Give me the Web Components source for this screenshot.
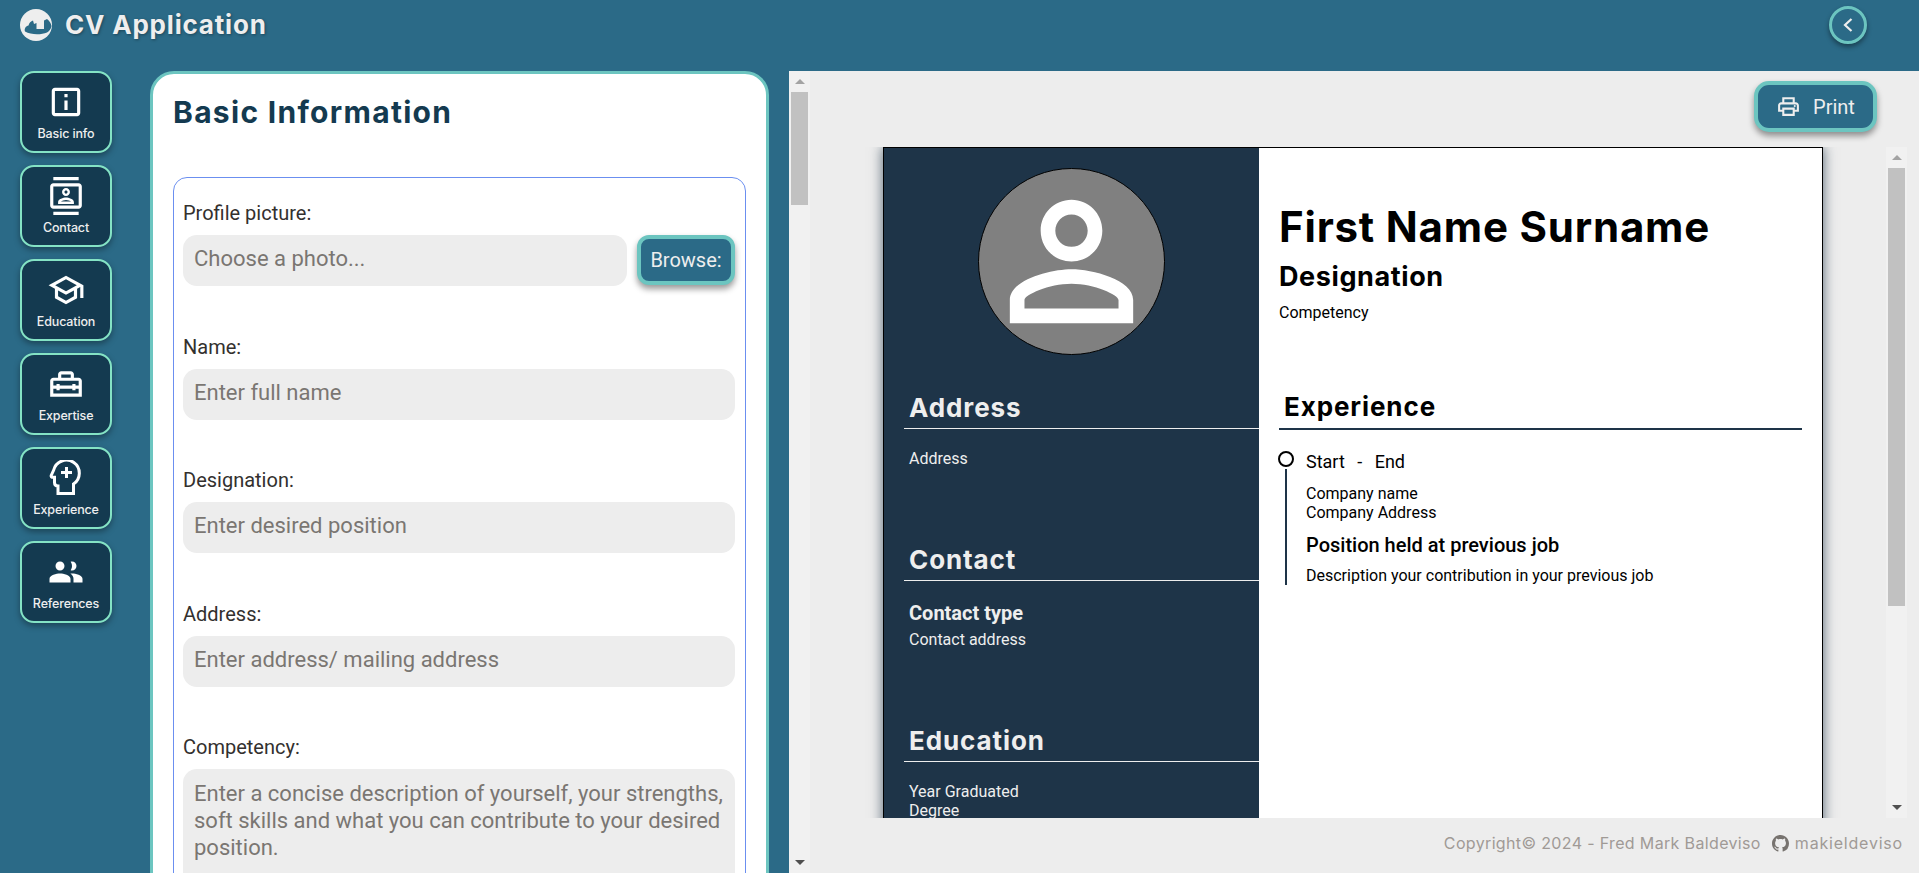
<!DOCTYPE html>
<html lang="en">
<head>
<meta charset="utf-8">
<title>CV Application</title>
<style>
    html, body { margin: 0; padding: 0; height: 100%; overflow: hidden; background: #2b6a87; }
</style>
</head>
<body>
<cv-app></cv-app>
<script>
const HEADING_FONT = `Inter, "Liberation Sans", sans-serif`;
const BODY_FONT = `Roboto, "Liberation Sans", sans-serif`;

const ICONS = {
    info: '<path d="M11 7h2v2h-2zm0 4h2v6h-2zm8-8H5c-1.1 0-2 .9-2 2v14c0 1.1.9 2 2 2h14c1.1 0 2-.9 2-2V5c0-1.1-.9-2-2-2zm0 16H5V5h14v14z"/>',
    contact: '<path d="M20 0H4v2h16V0zM4 24h16v-2H4v2zM20 4H4c-1.1 0-2 .9-2 2v12c0 1.1.9 2 2 2h16c1.1 0 2-.9 2-2V6c0-1.1-.9-2-2-2zm0 14H4V6h16v12zm-8-6c1.38 0 2.5-1.12 2.5-2.5S13.38 7 12 7 9.5 8.12 9.5 9.5 10.62 12 12 12zm0-3.5c.55 0 1 .45 1 1s-.45 1-1 1-1-.45-1-1 .45-1 1-1zm5 7.49C17 13.9 13.69 13 12 13s-5 .9-5 2.99V17h10v-1.01zm-8.19-.49c.61-.52 2.03-1 3.19-1 1.17 0 2.59.48 3.2 1H8.81z"/>',
    education: '<path d="M12 3L1 9l4 2.18v6L12 21l7-3.82v-6l2-1.09V17h2V9L12 3zm6.82 6L12 12.72 5.18 9 12 5.28 18.82 9zM17 15.99l-5 2.73-5-2.73v-3.72L12 15l5-2.73v3.72z"/>',
    expertise: '<path d="M20 8h-3V6c0-1.1-.9-2-2-2H9c-1.1 0-2 .9-2 2v2H4c-1.1 0-2 .9-2 2v10h20V10c0-1.1-.9-2-2-2zM9 6h6v2H9V6zm11 12H4v-3h2v1h2v-1h8v1h2v-1h2v3zm-2-5v-1h-2v1H8v-1H6v1H4v-3h16v3h-2z"/>',
    references: '<path d="M16 11c1.66 0 2.99-1.34 2.99-3S17.66 5 16 5c-.32 0-.63.05-.91.14.57.81.9 1.79.9 2.86s-.34 2.04-.9 2.86c.28.09.59.14.91.14zM8 11c1.66 0 3-1.34 3-3S9.66 5 8 5 5 6.34 5 8s1.34 3 3 3zm0 2c-2.33 0-7 1.17-7 3.5V19h14v-2.5C15 14.17 10.33 13 8 13zm8 0c-.29 0-.62.02-.97.05.02.01.03.03.04.04 1.14.83 1.93 1.94 1.93 3.41V19h6v-2.5c0-2.33-4.67-3.5-7-3.5z"/>',
};

class AppHeader extends HTMLElement {
    constructor() {
        super();
        this.attachShadow({ mode: 'open' });
        this.shadowRoot.innerHTML = `
            <style>
                :host {
                    display: flex;
                    align-items: center;
                    justify-content: space-between;
                    height: 71px;
                    box-sizing: border-box;
                    padding: 0 52px 21px 20px;
                    background: #2b6a87;
                }
                .brand { display: flex; align-items: center; gap: 13px; }
                .brand svg { display: block; width: 32px; height: 32px; }
                h1 {
                    margin: 0;
                    font: 700 26px/32px ${HEADING_FONT};
                    letter-spacing: 0.8px;
                    color: #eeeeee;
                    text-shadow: 1px 1px 3px rgba(0,0,0,0.35);
                }
                .back {
                    width: 38px;
                    height: 38px;
                    box-sizing: border-box;
                    border: 3px solid #6cc5c0;
                    border-radius: 50%;
                    background: #2b6a87;
                    box-shadow: 0 3px 5px rgba(0,0,0,0.4);
                    display: flex;
                    align-items: center;
                    justify-content: center;
                }
                .back svg { display: block; width: 14px; height: 16px; }
            </style>
            <div class="brand">
                <svg viewBox="0 0 32 32">
                    <circle cx="16" cy="16" r="16" fill="#eeeeee"/>
                    <path d="M5 22.500C4 19.500 6 17 8.500 16.500C9 14 11 12 13 11.500L14 15L16.500 14L16.500 20L24 20L24 11.500L27 10C29.500 12 31 14 31.500 17C31 20 29 22.500 27 23.500C21 26 11 26 5 22.500Z" fill="#2b6a87"/>
                </svg>
                <h1>CV Application</h1>
            </div>
            <div class="back">
                <svg viewBox="0 0 14 16"><path d="M10.500 2 4 8l6.500 6" fill="none" stroke="#eeeeee" stroke-width="2.200"/></svg>
            </div>
        `;
    }
}

class NavButton extends HTMLElement {
    constructor() {
        super();
        this.attachShadow({ mode: 'open' });
        this.shadowRoot.innerHTML = `
            <style>
                :host {
                    display: flex;
                    flex-direction: column;
                    align-items: center;
                    width: 92px;
                    height: 82px;
                    box-sizing: border-box;
                    padding-top: 10px;
                    border: 2px solid #84e3c5;
                    border-radius: 14px;
                    background: #143a50;
                    box-shadow: 0 3px 6px rgba(0,0,0,0.35);
                    color: #eeeeee;
                }
                .icon { width: 38px; height: 38px; display: flex; align-items: center; justify-content: center; }
                ::slotted(svg) { display: block; flex: none; fill: #ffffff; }
                .label {
                    margin-top: 5px;
                    font: 500 12.500px/16px ${HEADING_FONT};
                    letter-spacing: -0.15px;
                }
            </style>
            <div class="icon"><slot></slot></div>
            <div class="label"></div>
        `;
    }

    connectedCallback() {
        this.shadowRoot.querySelector('.label').textContent = this.getAttribute('label');
    }
}

class NavRail extends HTMLElement {
    constructor() {
        super();
        this.attachShadow({ mode: 'open' });
        this.shadowRoot.innerHTML = `
            <style>
                :host {
                    display: flex;
                    flex-direction: column;
                    flex: none;
                    gap: 12px;
                    width: 130px;
                    padding-left: 20px;
                }
            </style>
            <nav-button label="Basic info"><svg width="38" height="38" viewBox="0 0 24 24">${ICONS.info}</svg></nav-button>
            <nav-button label="Contact"><svg width="38" height="38" viewBox="0 0 24 24">${ICONS.contact}</svg></nav-button>
            <nav-button label="Education"><svg width="38" height="38" viewBox="0 0 24 24">${ICONS.education}</svg></nav-button>
            <nav-button label="Expertise"><svg width="38" height="38" viewBox="0 0 24 24">${ICONS.expertise}</svg></nav-button>
            <nav-button label="Experience">
                <svg width="34" height="36" viewBox="0 0 34 36" style="fill:none;stroke:#fff;stroke-width:3">
                    <path d="M24.500 33.500V24A13 13 0 1 0 4.700 10L2.200 15.500Q1.800 17.300 4 17.300H5.500V22.500Q5.500 26 9 26V33.500Z"/>
                    <path d="M17.500 7v11M12 12.500h11"/>
                </svg>
            </nav-button>
            <nav-button label="References"><svg width="36" height="36" viewBox="0 0 24 24">${ICONS.references}</svg></nav-button>
        `;
    }
}

class FormField extends HTMLElement {
    constructor() {
        super();
        this.attachShadow({ mode: 'open' });
        this.shadowRoot.innerHTML = `
            <style>
                :host { display: block; font-family: ${BODY_FONT}; }
                label {
                    display: block;
                    height: 24px;
                    margin-bottom: 11px;
                    font-size: 20px;
                    line-height: 26px;
                    color: #33302e;
                }
                .row { display: flex; gap: 10px; }
                .box {
                    flex: 1;
                    min-height: 51px;
                    box-sizing: border-box;
                    padding: 10px 11px;
                    border-radius: 14px;
                    background: #ededed;
                    font-size: 22px;
                    line-height: 27px;
                    color: #7a7672;
                }
                :host([multiline]) .box { padding-top: 11px; min-height: 160px; }
                ::slotted(*) { flex: none; }
            </style>
            <label></label>
            <div class="row"><div class="box"></div><slot></slot></div>
        `;
    }

    connectedCallback() {
        this.shadowRoot.querySelector('label').textContent = this.getAttribute('label');
        this.shadowRoot.querySelector('.box').textContent = this.getAttribute('placeholder');
    }
}

class ActionButton extends HTMLElement {
    constructor() {
        super();
        this.attachShadow({ mode: 'open' });
        this.shadowRoot.innerHTML = `
            <style>
                :host {
                    display: inline-flex;
                    align-items: center;
                    justify-content: center;
                    box-sizing: border-box;
                    border: 4px solid #6cc5c0;
                    border-radius: 12px;
                    background: #2b6a87;
                    box-shadow: 0 4px 6px rgba(0,0,0,0.4);
                    color: #eeeeee;
                    font: 400 20px/24px ${BODY_FONT};
                }
            </style>
            <slot></slot>
        `;
    }
}

class FormPanel extends HTMLElement {
    constructor() {
        super();
        this.attachShadow({ mode: 'open' });
        this.shadowRoot.innerHTML = `
            <style>
                :host {
                    display: block;
                    flex: none;
                    width: 619px;
                    height: 1100px;
                    box-sizing: border-box;
                    padding: 20px 20px 0;
                    border: 3px solid #6cc5c0;
                    border-radius: 24px;
                    background: #ffffff;
                }
                h2 {
                    margin: 0 0 47px;
                    font: 700 30px/36px ${HEADING_FONT};
                    letter-spacing: 1.300px;
                    color: #143a50;
                }
                .fields {
                    display: flex;
                    flex-direction: column;
                    gap: 47.500px;
                    width: 573px;
                    box-sizing: border-box;
                    padding: 22px 10px 22px 9px;
                    border: 1px solid #6b8ff0;
                    border-radius: 14px;
                }
                action-button { width: 98px; height: 50px; }
            </style>
            <h2>Basic Information</h2>
            <div class="fields">
                <form-field label="Profile picture:" placeholder="Choose a photo...">
                    <action-button>Browse:</action-button>
                </form-field>
                <form-field label="Name:" placeholder="Enter full name"></form-field>
                <form-field label="Designation:" placeholder="Enter desired position"></form-field>
                <form-field label="Address:" placeholder="Enter address/ mailing address"></form-field>
                <form-field multiline label="Competency:" placeholder="Enter a concise description of yourself, your strengths, soft skills and what you can contribute to your desired position."></form-field>
            </div>
        `;
    }
}

class ScrollTrack extends HTMLElement {
    constructor() {
        super();
        this.attachShadow({ mode: 'open' });
        this.shadowRoot.innerHTML = `
            <style>
                :host {
                    display: flex;
                    flex-direction: column;
                    flex: none;
                    width: 21px;
                    background: #f1f1f1;
                }
                .end { height: 21px; display: flex; align-items: center; justify-content: center; flex: none; }
                .up { width: 0; height: 0; border: 5px solid transparent; border-top: 0; border-bottom: 5px solid #a3a3a3; }
                .down { width: 0; height: 0; border: 5px solid transparent; border-bottom: 0; border-top: 5px solid #505050; }
                .thumb { margin: 0 2px; background: #c1c1c1; flex: none; }
                .rest { flex: 1; }
            </style>
            <div class="end"><div class="up"></div></div>
            <div class="thumb"></div>
            <div class="rest"></div>
            <div class="end"><div class="down"></div></div>
        `;
    }

    connectedCallback() {
        this.shadowRoot.querySelector('.thumb').style.height = this.getAttribute('thumb') + 'px';
    }
}

class CvSection extends HTMLElement {
    constructor() {
        super();
        this.attachShadow({ mode: 'open' });
        this.shadowRoot.innerHTML = `
            <style>
                :host { display: block; font: 400 16px/19px ${BODY_FONT}; }
                h3 {
                    margin: 0;
                    height: 36px;
                    box-sizing: border-box;
                    padding-left: 5px;
                    border-bottom: 1px solid #eeeeee;
                    font: 700 26px/30px ${HEADING_FONT};
                    letter-spacing: 0.9px;
                }
                :host([dark]) h3 { border-bottom: 2px solid #1e3448; height: 38px; }
                .body { padding: 20px 0 0 5px; }
                :host([dark]) .body { padding: 0; }
            </style>
            <h3></h3>
            <div class="body"><slot></slot></div>
        `;
    }

    connectedCallback() {
        this.shadowRoot.querySelector('h3').textContent = this.getAttribute('title');
    }
}

class TimelineEntry extends HTMLElement {
    constructor() {
        super();
        this.attachShadow({ mode: 'open' });
        this.shadowRoot.innerHTML = `
            <style>
                :host {
                    display: grid;
                    grid-template-columns: 14px 1fr;
                    column-gap: 13px;
                    margin-top: 21px;
                    font: 400 16px/19px ${BODY_FONT};
                    color: #000000;
                }
                .rail { display: flex; flex-direction: column; align-items: center; width: 14px; }
                .dot {
                    flex: none;
                    width: 16px;
                    height: 16px;
                    box-sizing: border-box;
                    border: 2px solid #000000;
                    border-radius: 50%;
                    margin: 0 -1px 2px;
                }
                .line { flex: 1; width: 2px; background: #1e3448; }
                .dates { font-size: 18px; line-height: 22px; word-spacing: 8px; margin-bottom: 11px; }
                .pos { font-size: 20px; font-weight: 500; line-height: 24px; margin: 11px 0 9px; }
            </style>
            <div class="rail"><div class="dot"></div><div class="line"></div></div>
            <div>
                <div class="dates">Start - End</div>
                <div>Company name</div>
                <div>Company Address</div>
                <div class="pos">Position held at previous job</div>
                <div>Description your contribution in your previous job</div>
            </div>
        `;
    }
}

class CvSheet extends HTMLElement {
    constructor() {
        super();
        this.attachShadow({ mode: 'open' });
        this.shadowRoot.innerHTML = `
            <style>
                :host {
                    display: grid;
                    grid-template-columns: 375px 1fr;
                    flex: none;
                    width: 940px;
                    height: 1329px;
                    box-sizing: border-box;
                    border: 1px solid #000000;
                    border-bottom: 0;
                    background: #ffffff;
                    box-shadow: 0 0 12px rgba(30,52,72,0.75);
                    color: #000000;
                }
                .side {
                    background: #1e3448;
                    color: #eeeeee;
                    padding: 20px 0 0 20px;
                    box-sizing: border-box;
                }
                .avatar {
                    box-sizing: border-box;
                    width: 187px;
                    height: 187px;
                    margin: 0 0 38px 74px;
                    border: 1px solid #000000;
                    border-radius: 50%;
                    background: #808080;
                }
                .avatar svg { display: block; width: 185px; height: 185px; fill: #ffffff; }
                .strong { font-size: 20px; line-height: 24px; font-weight: 700; margin-bottom: 5px; }
                .main { padding: 0 20px; }
                .name {
                    margin: 55px 0 0;
                    font: 700 42px/48px ${HEADING_FONT};
                    letter-spacing: 0.8px;
                }
                .role {
                    margin: 10px 0 0;
                    font: 700 27px/32px ${HEADING_FONT};
                    letter-spacing: 0.6px;
                }
                .comp { margin-top: 10px; font: 400 16px/19px ${BODY_FONT}; }
                .exp { margin-top: 70px; }
            </style>
            <div class="side">
                <div class="avatar">
                    <svg viewBox="0 0 24 24"><path d="M12 5.900c1.160 0 2.100.94 2.100 2.100s-.94 2.100-2.100 2.100S9.900 9.160 9.900 8s.94-2.100 2.100-2.100m0 9c2.970 0 6.100 1.460 6.100 2.100v1.100H5.900V17c0-.64 3.130-2.100 6.100-2.100M12 4C9.790 4 8 5.790 8 8s1.790 4 4 4 4-1.790 4-4-1.790-4-4-4zm0 9c-2.670 0-8 1.340-8 4v3h16v-3c0-2.660-5.330-4-8-4z"/></svg>
                </div>
                <cv-section title="Address" style="height:152px">Address</cv-section>
                <cv-section title="Contact" style="height:181px">
                    <div class="strong">Contact type</div>
                    <div>Contact address</div>
                </cv-section>
                <cv-section title="Education">
                    Year Graduated<br>Degree
                </cv-section>
            </div>
            <div class="main">
                <div class="name">First Name Surname</div>
                <div class="role">Designation</div>
                <div class="comp">Competency</div>
                <cv-section class="exp" dark title="Experience">
                    <timeline-entry></timeline-entry>
                </cv-section>
            </div>
        `;
    }
}

class PagePreview extends HTMLElement {
    constructor() {
        super();
        this.attachShadow({ mode: 'open' });
        this.shadowRoot.innerHTML = `
            <style>
                :host {
                    display: flex;
                    flex-direction: column;
                    flex: 1;
                    min-width: 0;
                    background: #ededed;
                }
                .tools {
                    display: flex;
                    justify-content: flex-end;
                    flex: none;
                    height: 76px;
                    box-sizing: border-box;
                    padding: 10px 42px 0 0;
                }
                action-button { width: 123px; height: 51px; gap: 12px; border-radius: 15px; }
                action-button svg { display: block; width: 25px; height: 25px; fill: #eeeeee; }
                .sheet-row {
                    display: flex;
                    justify-content: space-between;
                    flex: 1;
                    min-height: 0;
                    overflow: hidden;
                    padding: 0 12px 0 73px;
                }
                .foot {
                    display: flex;
                    align-items: center;
                    justify-content: flex-end;
                    flex: none;
                    height: 55px;
                    box-sizing: border-box;
                    padding: 0 16px 5px 0;
                    font: 400 16px/20px ${HEADING_FONT};
                    letter-spacing: 0.35px;
                    color: #a09a96;
                }
                .foot .handle { letter-spacing: 0.8px; }
                .foot svg { display: block; width: 17px; height: 17px; margin: 0 6px 0 11px; fill: #77736f; }
            </style>
            <div class="tools">
                <action-button>
                    <svg viewBox="0 0 24 24"><path d="M19 8h-1V3H6v5H5c-1.660 0-3 1.340-3 3v6h4v4h12v-4h4v-6c0-1.660-1.340-3-3-3zM8 5h8v3H8V5zm8 12v2H8v-4h8v2zm2-2v-2H6v2H4v-4c0-.55.45-1 1-1h14c.55 0 1 .45 1 1v4h-2z"/><circle cx="18" cy="11.500" r="1"/></svg>
                    Print
                </action-button>
            </div>
            <div class="sheet-row">
                <cv-sheet></cv-sheet>
                <scroll-track thumb="438"></scroll-track>
            </div>
            <div class="foot">
                <span>Copyright© 2024 - Fred Mark Baldeviso</span>
                <svg viewBox="0 0 16 16"><path d="M8 0C3.580 0 0 3.580 0 8c0 3.540 2.290 6.530 5.470 7.590.4.07.55-.17.55-.38 0-.19-.01-.82-.01-1.490-2.010.37-2.530-.49-2.690-.94-.09-.23-.48-.94-.82-1.130-.28-.15-.68-.52-.01-.53.63-.01 1.080.58 1.230.82.72 1.210 1.870.87 2.330.66.07-.52.28-.87.51-1.070-1.780-.2-3.640-.89-3.640-3.950 0-.87.31-1.590.82-2.150-.08-.2-.36-1.020.08-2.120 0 0 .67-.21 2.200.82.64-.18 1.320-.27 2-.27.68 0 1.360.09 2 .27 1.530-1.040 2.200-.82 2.200-.82.44 1.100.16 1.920.08 2.120.51.56.82 1.270.82 2.150 0 3.070-1.870 3.750-3.650 3.950.29.25.54.73.54 1.480 0 1.070-.01 1.930-.01 2.200 0 .21.15.46.55.38A8.013 8.013 0 0016 8c0-4.420-3.580-8-8-8z"/></svg>
                <span class="handle">makieldeviso</span>
            </div>
        `;
    }
}

class CvApp extends HTMLElement {
    constructor() {
        super();
        this.attachShadow({ mode: 'open' });
        this.shadowRoot.innerHTML = `
            <style>
                :host {
                    display: flex;
                    flex-direction: column;
                    height: 873px;
                    overflow: hidden;
                    background: #2b6a87;
                }
                .main { display: flex; flex: 1; min-height: 0; overflow: hidden; }
                scroll-track { margin-left: 20px; }
            </style>
            <app-header></app-header>
            <div class="main">
                <nav-rail></nav-rail>
                <form-panel></form-panel>
                <scroll-track thumb="113"></scroll-track>
                <page-preview></page-preview>
            </div>
        `;
    }
}

customElements.define('action-button', ActionButton);
customElements.define('app-header', AppHeader);
customElements.define('nav-button', NavButton);
customElements.define('nav-rail', NavRail);
customElements.define('form-field', FormField);
customElements.define('form-panel', FormPanel);
customElements.define('scroll-track', ScrollTrack);
customElements.define('cv-section', CvSection);
customElements.define('timeline-entry', TimelineEntry);
customElements.define('cv-sheet', CvSheet);
customElements.define('page-preview', PagePreview);
customElements.define('cv-app', CvApp);
</script>
</body>
</html>
